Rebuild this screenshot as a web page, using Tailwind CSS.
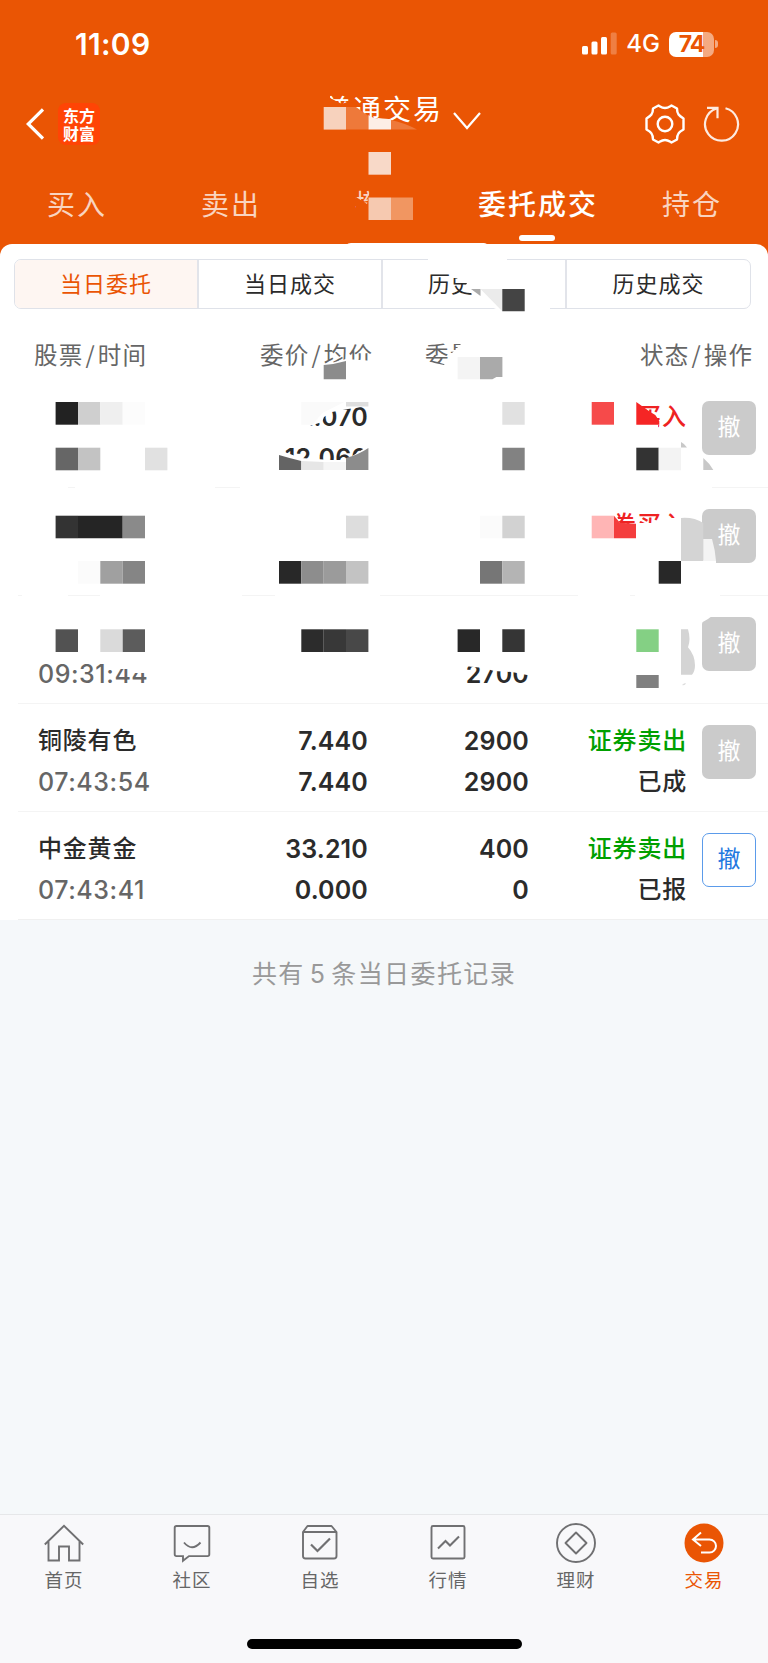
<!DOCTYPE html>
<html lang="zh-CN">
<head>
<meta charset="utf-8">
<title>委托成交</title>
<script src="https://cdn.jsdelivr.net/npm/@tailwindcss/browser@4"></script>
</head>
<body class="bg-[#f5f8fa]">
<div class="relative flex h-[1663px] w-[768px] flex-col overflow-hidden bg-[#f5f8fa] font-['Inter','Noto_Sans_CJK_SC',sans-serif] text-[#2b2b2b]">

  <header class="h-[256px] shrink-0 bg-[#ea5504] text-white">
    <div class="flex h-[88px] items-center pl-[75px] pr-[50px]">
      <span class="text-[30px] leading-none font-semibold tracking-[0.300px]">11:09</span>
      <svg class="ml-auto" width="36" height="24" viewBox="0 0 36 24" fill="#fff"><rect x="1" y="14" width="6" height="8.500" rx="1.500"/><rect x="10.500" y="9.500" width="6" height="13" rx="1.500"/><rect x="20" y="5" width="6" height="17.500" rx="1.500"/><rect x="29.700" y="0.500" width="6" height="22" rx="1.500" opacity=".25"/></svg>
      <span class="ml-[9px] text-[24px] leading-none font-medium">4G</span>
      <div class="ml-[9px] flex items-center">
        <div class="flex h-[25px] w-[45px] items-center justify-center rounded-[7px] bg-linear-to-r from-white from-75% to-white/50 to-75% text-[23px] leading-none font-bold tracking-[-1px] text-[#ea5504]">74</div>
        <div class="ml-[1px] h-[8px] w-[3px] rounded-r-full bg-white/50"></div>
      </div>
    </div>
    <div class="flex h-[72px] items-center pl-[26px]">
      <svg width="18" height="32" viewBox="0 0 18 32" fill="none" stroke="#fff" stroke-width="3.200"><path d="M17 1.500 2.200 16 17 30.500"/></svg>
      <div class="ml-[14px] grid h-[42px] w-[42px] place-content-center rounded-[8px] bg-[#ff4405] font-['Noto_Sans_CJK_SC',sans-serif] text-[16px] leading-[18px] font-bold"><span class="w-[32px] pb-[1px]">东方财富</span></div>
      <div class="mb-[32px] ml-[223px] w-[119px] font-['Noto_Sans_CJK_SC',sans-serif] text-[28px] leading-[32px] tracking-[2px] whitespace-nowrap">普通交易</div>
      <svg class="mt-[-7px] ml-[11px]" width="28" height="18" viewBox="0 0 28 18" fill="none" stroke="#fff" stroke-width="2.200"><path d="M1 1l13 15L27 1"/></svg>
      <svg class="ml-[163px]" width="42" height="40" viewBox="-21 -20 42 40" fill="none" stroke="#fff" stroke-width="2.400"><circle r="7.300"/><path d="M-6.500-18.500C-4-17-3-16 0-16s4-1 6.500-2.500L12-15.500C12-10 14-8.500 18.500-5.500V0 5.500C14 8 12 10 12 15.500L6.500 18.500C4 17 3 16 0 16s-4 1-6.500 2.500L-12 15.500C-12 10-14 8-18.500 5.500V-5.500C-14-8.500-12-10-12-15.500Z" stroke-linejoin="round"/></svg>
      <svg class="ml-[17px]" width="38" height="38" viewBox="0 0 38 38" fill="none" stroke="#fff" stroke-opacity=".88" stroke-width="2.200"><path d="M22.500 3.200A16.500 16.500 0 1 1 13.500 3.500M4 2.800h10.500v10.500"/></svg>
    </div>
    <nav class="flex h-[88px] font-['Noto_Sans_CJK_SC',sans-serif] text-[28px] leading-[40px] tracking-[2px] whitespace-nowrap text-white/75">
      <span class="mt-[23px] ml-[47px] w-[154px]">买入</span>
      <span class="mt-[23px] w-[154px]">卖出</span>
      <span class="mt-[23px] w-[123px]">撤单</span>
      <span class="mt-[23px] flex w-[184px] flex-col font-medium text-white">委托成交<i class="mt-[12px] ml-[41px] h-[6px] w-[36px] rounded-full bg-white"></i></span>
      <span class="mt-[23px]">持仓</span>
    </nav>
  </header>

  <main class="relative mt-[-12px] h-[676px] shrink-0 rounded-t-[12px] bg-white">
    <div class="flex h-[65px] px-[14px] pt-[15px]">
      <div class="flex h-[50px] w-[737px] shrink-0 overflow-hidden rounded-[7px] border border-[#dfe2e9] font-['Noto_Sans_CJK_SC',sans-serif] text-[22px] tracking-[1px]">
        <div class="flex w-[184px] items-center justify-center border-r-2 border-[#e2e4ea] bg-[#fef6f2] pb-[4px] text-[#ea5504]">当日委托</div>
        <div class="flex w-[184px] items-center justify-center border-r-2 border-[#e2e4ea] pb-[4px]">当日成交</div>
        <div class="flex w-[184px] items-center justify-center border-r-2 border-[#e2e4ea] pb-[4px]">历史委托</div>
        <div class="flex flex-1 items-center justify-center pb-[4px]">历史成交</div>
      </div>
    </div>
    <div class="flex h-[71px] items-center pt-[20px] pl-[34px] font-['Noto_Sans_CJK_SC',sans-serif] text-[23.500px] tracking-[1.200px] whitespace-nowrap text-[#666]">
      <span class="w-[226px]">股票<span class="mx-[2px]">/</span>时间</span>
      <span class="w-[165px]">委价<span class="mx-[2px]">/</span>均价</span>
      <span class="w-[215px]">委量</span>
      <span>状态<span class="mx-[2px]">/</span>操作</span>
    </div>

    <div class="text-[25px] leading-[41px] font-semibold tracking-[0.150px] whitespace-nowrap">
      <section class="ml-[18px] flex h-[108px] border-b border-[#f4f4f4] pt-[16px] pl-[20px]">
        <div class="w-[150px]"></div>
        <div class="w-[180px] pt-[1px] text-right"><p>12.070</p><p>12.060</p></div>
        <div class="w-[161px]"></div>
        <div class="mt-[-2px] w-[158px] text-right font-['Noto_Sans_CJK_SC',sans-serif] text-[24px] font-medium tracking-[1px] text-[#ee2222]"><p>证券买入</p></div>
        <button class="mt-[5px] ml-[15px] h-[54px] w-[54px] rounded-[7px] bg-[#cbcbcb] pb-[2px] text-[23px] leading-[52px] font-normal text-white">撤</button>
      </section>
      <section class="ml-[18px] flex h-[108px] border-b border-[#f4f4f4] pt-[16px] pl-[20px]">
        <div class="w-[491px]"></div>
        <div class="mt-[-2px] w-[158px] text-right font-['Noto_Sans_CJK_SC',sans-serif] text-[24px] font-medium tracking-[1px] text-[#ee2222]"><p>证券买入</p></div>
        <button class="mt-[5px] ml-[15px] h-[54px] w-[54px] rounded-[7px] bg-[#cbcbcb] pb-[2px] text-[23px] leading-[52px] font-normal text-white">撤</button>
      </section>
      <section class="ml-[18px] flex h-[108px] border-b border-[#f4f4f4] pt-[16px] pl-[20px]">
        <div class="w-[150px] pt-[42px] font-medium tracking-[0.550px] text-[#666]"><p>09:31:44</p></div>
        <div class="w-[180px]"></div>
        <div class="w-[161px] pt-[42px] text-right"><p>2700</p></div>
        <div class="w-[158px]"></div>
        <button class="mt-[5px] ml-[15px] h-[54px] w-[54px] rounded-[7px] bg-[#cbcbcb] pb-[2px] text-[23px] leading-[52px] font-normal text-white">撤</button>
      </section>
      <section class="ml-[18px] flex h-[108px] border-b border-[#f4f4f4] pt-[16px] pl-[20px]">
        <div class="w-[150px]"><p class="mt-[-2px] font-['Noto_Sans_CJK_SC',sans-serif] text-[24px] font-medium tracking-[0.800px]">铜陵有色</p><p class="mt-[3px] font-medium tracking-[0.550px] text-[#666]">07:43:54</p></div>
        <div class="w-[180px] pt-[1px] text-right"><p>7.440</p><p>7.440</p></div>
        <div class="w-[161px] pt-[1px] text-right"><p>2900</p><p>2900</p></div>
        <div class="mt-[-2px] w-[158px] text-right font-['Noto_Sans_CJK_SC',sans-serif] text-[24px] font-medium tracking-[0.800px]"><p class="text-[#00a000]">证券卖出</p><p>已成</p></div>
        <button class="mt-[5px] ml-[15px] h-[54px] w-[54px] rounded-[7px] bg-[#cbcbcb] pb-[2px] text-[23px] leading-[52px] font-normal text-white">撤</button>
      </section>
      <section class="ml-[18px] flex h-[108px] border-b border-[#f0f0f0] pt-[16px] pl-[20px]">
        <div class="w-[150px]"><p class="mt-[-2px] font-['Noto_Sans_CJK_SC',sans-serif] text-[24px] font-medium tracking-[0.800px]">中金黄金</p><p class="mt-[3px] font-medium tracking-[0.550px] text-[#666]">07:43:41</p></div>
        <div class="w-[180px] pt-[1px] text-right"><p>33.210</p><p>0.000</p></div>
        <div class="w-[161px] pt-[1px] text-right"><p>400</p><p>0</p></div>
        <div class="mt-[-2px] w-[158px] text-right font-['Noto_Sans_CJK_SC',sans-serif] text-[24px] font-medium tracking-[0.800px]"><p class="text-[#00a000]">证券卖出</p><p>已报</p></div>
        <button class="mt-[5px] ml-[15px] h-[54px] w-[54px] rounded-[7px] border border-[#5b9bea] bg-white pb-[2px] text-[23px] leading-[50px] font-normal text-[#1f78e0]">撤</button>
      </section>
    </div>
  </main>

  <p class="mt-[32px] text-center font-['Noto_Sans_CJK_SC',sans-serif] text-[25px] leading-[40px] tracking-[1.400px] text-[#999]">共有<span class="mx-[5px] font-['Inter']">5</span>条当日委托记录</p>

  <footer class="mt-auto flex h-[149px] shrink-0 flex-col items-center border-t border-[#e6e7e9] bg-[#f8f8fa]">
    <div class="grid h-[124px] w-full grid-cols-6 font-['Noto_Sans_CJK_SC',sans-serif] text-[18.500px] leading-[26px] tracking-[1px] text-[#666]">
      <div class="flex flex-col items-center pt-[8px]"><svg width="40" height="40" viewBox="0 0 40 40" fill="none" stroke="#707072" stroke-width="1.900"><path d="M.800 21.500 20 2.800l19.200 18.700M4.500 18.500V37.500H15V23.500H25V37.500H35.500V18.500"/></svg><span class="mt-[3px]">首页</span></div>
      <div class="flex flex-col items-center pt-[8px]"><svg width="40" height="40" viewBox="0 0 40 40" fill="none" stroke="#707072" stroke-width="1.900"><path d="M4.500 3h31q1.800 0 1.800 1.800v26.500q0 1.800-1.800 1.800H17l-6 4.700v-4.700H4.500q-1.800 0-1.800-1.800V4.800Q2.700 3 4.500 3Z"/><path d="M12 19.500q8 9.500 16.500 0"/></svg><span class="mt-[3px]">社区</span></div>
      <div class="flex flex-col items-center pt-[8px]"><svg width="40" height="40" viewBox="0 0 40 40" fill="none" stroke="#707072" stroke-width="1.900"><path d="M3 9 7.500 3h24L36.500 9v24q0 2.500-2.500 2.500H5.500Q3 35.500 3 33ZM3 9h33.500" stroke-linejoin="round"/><path d="M11 21.500l6.500 6.500L30 15.500" stroke-width="2.200"/></svg><span class="mt-[3px]">自选</span></div>
      <div class="flex flex-col items-center pt-[8px]"><svg width="40" height="40" viewBox="0 0 40 40" fill="none" stroke="#707072" stroke-width="1.900"><rect x="3.500" y="3" width="33" height="32.500" rx="1.500"/><path d="M10 25.500l7.500-7.500 4.500 4.500 9-9" stroke-width="2.100"/></svg><span class="mt-[3px]">行情</span></div>
      <div class="flex flex-col items-center pt-[8px]"><svg width="40" height="40" viewBox="0 0 40 40" fill="none" stroke="#707072" stroke-width="1.900"><circle cx="20" cy="20" r="19"/><path d="M20 9.500 30.500 20 20 30.500 9.500 20Z" stroke-linejoin="round"/></svg><span class="mt-[3px]">理财</span></div>
      <div class="flex flex-col items-center pt-[8px] text-[#ea5504]"><svg width="40" height="40" viewBox="0 0 40 40" fill="none" stroke="#fff" stroke-width="2"><circle cx="20" cy="20" r="19.500" fill="#ea5504" stroke="none"/><path d="M17 9.500 9 16.500l8 6.500M9 16.500H25.500a6.500 6.500 0 0 1 0 13H17"/></svg><span class="mt-[3px]">交易</span></div>
    </div>
    <div class="h-[10px] w-[275px] rounded-full bg-black"></div>
  </footer>

  <!-- Privacy mosaic laid over the personal data -->
  <svg class="pointer-events-none absolute inset-0" width="768" height="1663" viewBox="0 0 768 1663">
    <g>
      <path fill="#ea5504" d="M320 92h10v6l12 6q8-4 12 0v5l6 5 10 3 14 8v8h-64ZM356 197v30h60v-37h-46l-3 14Z"/>
      <path fill="#f7d2bd" d="M323.700 107H346v22.600h-22.300Z"/>
      <path fill="#ee793a" d="M346 107h10l12.500 9v13.600H346ZM391 120q14 3 26 9.600h-26Z"/>
      <path fill="#fdeee6" d="M368.500 115q6 4 10 3 8 1 12.500 1v10.600h-22.500Z"/>
      <path fill="#f8d9c8" d="M368.500 152H391v22.700h-22.500Z"/>
      <path fill="#f6c9b0" d="M368.500 197.500H391V220h-22.500Z"/>
      <path fill="#f19661" d="M391 197.500h22V220h-22Z"/>
      <path fill="#fff" d="M346 245q2-2 5-2h133q2 0 4 2Z"/>
    </g>
    <g>
      <path fill="#fff" d="M428 256h79v8h-79ZM452 270v8l5 0 3 5 7 0-4 8 8 2 10 10 20 8h49v-3h14v-34Z"/>
      <path fill="#fff" d="M500 300h50v12h-50Z"/>
      <path fill="#aaa" d="M471 289h9.500v7Z"/>
      <path fill="#ebebeb" d="M480.500 289h22v22.500Z"/>
      <path fill="#444" d="M502.300 289h22.400v22.300h-22.400Z"/>
      <path fill="#fff" d="M323.700 365l22.300-6 28 2v20h-50.300Z"/>
      <path fill="#8c8c8c" d="M323.700 365q12-1 22.300-4v18.300h-22.300Z"/>
      <path fill="#fff" d="M425 361l19 4 8-12 9-9h20v35h-56Z"/>
      <path fill="#f4f4f4" d="M457.600 357H480v22.300h-22.400Z"/>
      <path fill="#aaa" d="M480 357h22.400v20l-6 0-4 2.300H480Z"/>
    </g>
    <g>
      <path fill="#fff" d="M279 400h89v6l-20 3-16 3-8 5-2 5-12 4h-31ZM279 450l22 8 30 2 15 0 22-14v26h-89Z"/>
      <path fill="#fafafa" d="M301.300 402h43l-22 11-10 11.700h-11Z"/>
      <path fill="#dedede" d="M346 402h22.400v4.500H346Z"/>
      <path fill="#646464" d="M279 455q10 3 22.300 6v9H279Z"/>
      <path fill="#e6e6e6" d="M301.300 461l22.400 1v8h-22.400Z"/>
      <path fill="#f5f5f5" d="M323.700 462H346v8h-22.300Z"/>
      <path fill="#8c8c8c" d="M346 458q12-3 22.400-10v22H346Z"/>
      <path fill="#fff" d="M586 398h50l6 14 10 12v8h-66ZM640 424l18-2v9h-18Z"/>
      <path fill="#f64a4a" d="M591.700 402H614v22.700h-22.300Z"/>
      <path fill="#f52525" d="M636.300 402l14 10 5 3 4 6v3.700h-23Z"/>
      <path fill="#c8c8c8" d="M681 442q4 2 6 5.600h-6ZM703.300 458q6 5 10 12h-10Z"/>
    </g>
    <g>
      <path fill="#222" d="M55.600 402H78v22.700H55.600Z"/><path fill="#cfcfcf" d="M78 402h22.300v22.700H78Z"/><path fill="#efefef" d="M100.300 402h22.400v22.700h-22.400Z"/><path fill="#fcfcfc" d="M122.700 402H145v22.700h-22.300Z"/>
      <path fill="#666" d="M55.600 447.700H78v22.600H55.600Z"/><path fill="#c3c3c3" d="M78 447.700h22.300v22.600H78Z"/><path fill="#e1e1e1" d="M145 447.700h22.400v22.600H145Z"/>
      <path fill="#e1e1e1" d="M502.300 402h22.400v22.700h-22.400Z"/><path fill="#828282" d="M502.300 447.700h22.400v22.600h-22.400Z"/>
      <path fill="#333" d="M636.300 447.700h22.400v22.600h-22.400Z"/><path fill="#f3f3f3" d="M658.700 447.700H681v22.600h-22.300Z"/>
      <path fill="#fff" d="M18 486h50v4H18ZM75 486h140v4H75ZM240 486h472v4H240ZM22 594h46v4H22ZM100 594h142v4H100ZM275 594h105v4H275ZM578 594h52v4h-52ZM635 594h85v4h-85Z"/>
    </g>
    <g>
      <path fill="#333" d="M55.600 515.700H78v22.600H55.600Z"/><path fill="#252525" d="M78 515.700h44.700v22.600H78Z"/><path fill="#8a8a8a" d="M122.700 515.700H145v22.600h-22.300Z"/>
      <path fill="#fbfbfb" d="M78 561h22.300v22.700H78Z"/><path fill="#a0a0a0" d="M100.300 561h22.400v22.700h-22.400Z"/><path fill="#858585" d="M122.700 561H145v22.700h-22.300Z"/>
      <path fill="#ddd" d="M346 515.700h22.400v22.600H346Z"/>
      <path fill="#282828" d="M279 561h22.300v22.700H279Z"/><path fill="#8d8d8d" d="M301.300 561h22.400v22.700h-22.400Z"/><path fill="#9b9b9b" d="M323.700 561H346v22.700h-22.300Z"/><path fill="#c3c3c3" d="M346 561h22.400v22.700H346Z"/>
      <path fill="#fbfbfb" d="M480 515.700h22.300v22.600H480Z"/><path fill="#d2d2d2" d="M502.300 515.700h22.400v22.600h-22.400Z"/><path fill="#767676" d="M480 561h22.300v22.700H480Z"/><path fill="#b4b4b4" d="M502.300 561h22.400v22.700h-22.400Z"/>
      <path fill="#fff" d="M586 508h28l6 16h16v-1h22l3-5h14v-8h11v30H586Z"/>
      <path fill="#ffb5b5" d="M591.700 515.700H614v22.600h-22.300Z"/><path fill="#f43d3d" d="M614 515.700l6 7 16 1v14.600h-22Z"/>
      <path fill="#282828" d="M658.700 561H681v22.700h-22.300Z"/>
      <path fill="#d4d4d4" d="M681 518q13-1 22.300 5v38H681Z"/><path fill="#f4f4f4" d="M703.300 539h8.700q3 10 4 22h-12.700Z"/><path fill="#fff" d="M701 561h15v4h-15Z"/>
    </g>
    <g>
      <path fill="#525252" d="M55.600 629.300H78V652H55.600Z"/><path fill="#dadada" d="M100.300 629.300h22.400V652h-22.400Z"/><path fill="#5c5c5c" d="M122.700 629.300H145V652h-22.300Z"/>
      <path fill="#2c2c2c" d="M301.300 629.300h22.400V652h-22.400Z"/><path fill="#383838" d="M323.700 629.300H346V652h-22.300Z"/><path fill="#484848" d="M346 629.300h22.400V652H346Z"/>
      <path fill="#282828" d="M457.600 629.300H480V652h-22.400Z"/><path fill="#353535" d="M502.300 629.300h22.400V652h-22.400Z"/>
      <path fill="#fff" d="M114 669h14l4 4h18v-17h-36ZM464 666l20 2 10 3 18 1 20 4v-20h-68Z"/>
      <path fill="#84d084" d="M636.300 629.300h22.400V652h-22.400Z"/><path fill="#808080" d="M636.300 675h22.400v13h-22.400Z"/>
      <path fill="#d4d4d4" d="M681 629.300h7q3 10 0 18 7 8 7 18 0 6-3 9.400h-11Z"/><path fill="#ddd" d="M682 685q2-2 4-2-1 3-4 2Z"/>
      <path fill="#fff" d="M700 616h12l-4 3-7 4Z"/>
    </g>
  </svg>
</div>
</body>
</html>
